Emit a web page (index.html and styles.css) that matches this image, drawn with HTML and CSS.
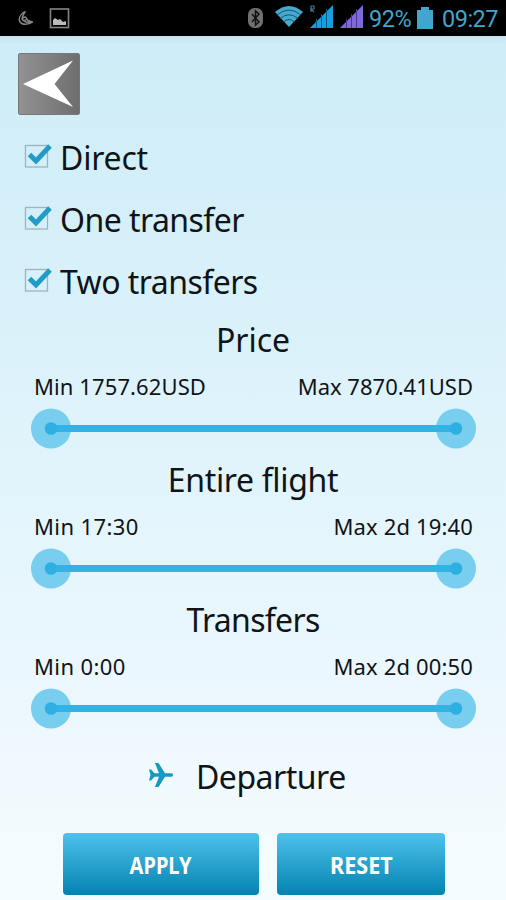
FILE: index.html
```html
<!DOCTYPE html>
<html lang="en">
<head>
<meta charset="utf-8">
<title>Flight filters</title>
<link rel="stylesheet" href="styles.css">
</head>
<body>
<header class="status">
  <svg class="notifications" width="80" height="36" viewBox="0 0 80 36">
    <path d="M24 12C20 15 18 19 20 22C22 25 28 25 33 22C28 23 23 22 22 19C22 16 24 14 25 12ZM22 19Q25 15 27 19Q24 22 22 19M27 20L32 22" fill="none" stroke="#858585" stroke-width="1.4"/>
    <rect x="50.5" y="9" width="18" height="18.500" fill="none" stroke="#858585" stroke-width="1.6"/>
    <path d="M53 25V20L55 18L58 20L60 19L63 22L66 21V25Z" fill="#bbb"/>
  </svg>
  <svg class="signals" width="124" height="36" viewBox="242 0 124 36">
    <rect x="248" y="8" width="15" height="20" rx="6.500" fill="#707070"/>
    <path d="M252 14L259 22L255.500 25V11L259 14L252 22" fill="none" stroke="#111" stroke-width="1.500"/>
    <path d="M275 12Q289 0 303 12L289 27Z" fill="#45a9d0"/>
    <path d="M277 15Q289 5 301 15M280 18.500Q289 11 298 18.500M283.500 22Q289 17 294.500 22" fill="none" stroke="#17566f" stroke-width="1"/>
    <path d="M310 28L333 5V28Z" fill="#159fe0"/>
    <path d="M340 28L363 5V28Z" fill="#8067db"/>
    <path d="M316.500 19V28M321.500 14V28M326.500 9V28" stroke="#075a88" stroke-width="1"/>
    <path d="M346.500 19V28M351.500 14V28M356.500 9V28" stroke="#4b3595" stroke-width="1"/>
    <path d="M311 12V6H314V9H311L314 12" fill="none" stroke="#3d7793" stroke-width="1.200"/>
  </svg>
  <span class="percent">92%</span>
  <svg class="battery" width="16" height="22" viewBox="0 0 16 22"><path d="M0 3H4V0H12V3H16V22H0Z" fill="#42a5cc"/></svg>
  <span class="clock">09:27</span>
</header>
<main>
  <button class="back" aria-label="Back"><svg width="62" height="62" viewBox="0 0 62 62"><path d="M5 31L55 7.500L36.500 31L55 54Z" fill="#fff"/></svg></button>
  <div class="options">
    <label class="option"><svg class="check" width="30" height="28" viewBox="0 0 30 28"><rect x="1.500" y="3.500" width="22" height="21.500"/><path d="M5.500 12.500L12 19L26 4"/></svg><span class="direct">Direct</span></label>
    <label class="option"><svg class="check" width="30" height="28" viewBox="0 0 30 28"><rect x="1.500" y="3.500" width="22" height="21.500"/><path d="M5.500 12.500L12 19L26 4"/></svg><span class="one">One transfer</span></label>
    <label class="option"><svg class="check" width="30" height="28" viewBox="0 0 30 28"><rect x="1.500" y="3.500" width="22" height="21.500"/><path d="M5.500 12.500L12 19L26 4"/></svg><span class="two">Two transfers</span></label>
  </div>
  <section class="range">
    <h2 class="price">Price</h2>
    <div class="limits"><span class="amount">Min 1757.62USD</span><span>Max 7870.41USD</span></div>
    <svg class="slider" width="446" height="41" viewBox="0 0 446 41"><circle class="halo" cx="21" cy="20.500" r="20"/><circle class="halo" cx="426" cy="20.500" r="20"/><path class="track" d="M21 20.500H426"/><circle class="dot" cx="21" cy="20.500" r="6.300"/><circle class="dot" cx="426" cy="20.500" r="6.300"/></svg>
  </section>
  <section class="range">
    <h2 class="flight">Entire flight</h2>
    <div class="limits"><span class="time">Min 17:30</span><span class="duration">Max 2d 19:40</span></div>
    <svg class="slider" width="446" height="41" viewBox="0 0 446 41"><circle class="halo" cx="21" cy="20.500" r="20"/><circle class="halo" cx="426" cy="20.500" r="20"/><path class="track" d="M21 20.500H426"/><circle class="dot" cx="21" cy="20.500" r="6.300"/><circle class="dot" cx="426" cy="20.500" r="6.300"/></svg>
  </section>
  <section class="range">
    <h2 class="transfers">Transfers</h2>
    <div class="limits"><span class="time">Min 0:00</span><span class="duration">Max 2d 00:50</span></div>
    <svg class="slider" width="446" height="41" viewBox="0 0 446 41"><circle class="halo" cx="21" cy="20.500" r="20"/><circle class="halo" cx="426" cy="20.500" r="20"/><path class="track" d="M21 20.500H426"/><circle class="dot" cx="21" cy="20.500" r="6.300"/><circle class="dot" cx="426" cy="20.500" r="6.300"/></svg>
  </section>
  <div class="departure">
    <svg width="26" height="26" viewBox="0 0 26 26"><path d="M1 7.500H3L6.500 11.300H11L7 1H10.500L17 11.300H24Q26 13 24 14.700H17L10.500 25H7L11 14.700H6.500L3 18.500H1L2.500 13Z" fill="#1698c4"/></svg>
    <span>Departure</span>
  </div>
  <div class="actions"><button class="apply"><span>APPLY</span></button><button class="reset"><span>RESET</span></button></div>
</main>
</body>
</html>
```
FILE: styles.css
```css
* { box-sizing: border-box; }
body {
  margin: 0;
  height: 900px;
  overflow: hidden;
  font-family: "Noto Sans", sans-serif;
  color: #101417;
  background: linear-gradient(#c6e5ef 36px, #cfedf8 44px, #d1eef9 130px, #daf1fa 320px, #e3f5fc 500px, #eef8fe 740px, #f2fcfe 830px, #f3fcfe);
}
svg { display: block; flex: none; }
button { padding: 0; border: 0; font: inherit; }
.status {
  display: flex;
  align-items: center;
  height: 36px;
  background: #000;
  color: #42a5cc;
  font: 23.5px/36px Roboto, sans-serif;
}
.status span { padding-top: 1px; }
.signals { margin-left: 162px; }
.percent { width: 47px; margin-left: 3px; letter-spacing: -0.4px; }
.battery { margin-left: 1px; }
.clock { margin-left: 9px; letter-spacing: -0.5px; }
main { height: 864px; padding-top: 17px; }
.back {
  display: block;
  width: 62px;
  height: 62px;
  margin-left: 18px;
  border: 1px solid #777;
  border-radius: 2px;
  background: linear-gradient(90deg, #929292, #6e6e6e);
}
.back svg { margin: -1px; }
.options { padding-top: 11px; }
.option { display: flex; height: 62px; padding-left: 24px; font-size: 32px; line-height: 64px; }
.direct { letter-spacing: -0.2px; }
.one, .two { letter-spacing: -0.55px; }
.check { margin: 16px 6px 0 0; fill: none; }
.check rect { stroke: #9eb3bd; stroke-width: 1.3; }
.check path { stroke: #229bc7; stroke-width: 5; }
.range { height: 140px; padding-top: 5px; }
h2 { margin: 0; height: 46px; font-size: 32px; font-weight: 400; line-height: 46px; text-align: center; }
.flight { letter-spacing: -0.35px; }
.transfers { letter-spacing: -0.7px; }
.limits {
  display: flex;
  justify-content: space-between;
  height: 43px;
  margin-top: 2px;
  padding: 0 33px 0 34px;
  font-size: 22px;
  line-height: 43px;
}
.amount { letter-spacing: 0.1px; }
.time { letter-spacing: 0.4px; }
.duration { letter-spacing: 0.15px; }
.slider { margin-left: 30px; }
.halo { fill: #78ceef; }
.track { fill: none; stroke: #32b3e4; stroke-width: 7; }
.dot { fill: #2dafe2; }
.departure { display: flex; height: 66px; margin-top: 12px; padding-left: 148px; font-size: 32px; line-height: 66px; letter-spacing: -0.5px; }
.departure svg { margin: 18px 22px 0 0; }
.actions { display: flex; gap: 18px; margin: 23px 0 0 63px; }
.actions button {
  height: 62px;
  border-radius: 4px;
  color: #fff;
  font: 700 23px/64px "Noto Sans", sans-serif;
  background: linear-gradient(#4fc1ec, #0383b1);
}
.actions span { display: inline-block; }
.apply { width: 196px; }
.reset { width: 168px; }
.apply span { transform: scaleX(0.87); }
.reset span { transform: scaleX(0.94); }
```
